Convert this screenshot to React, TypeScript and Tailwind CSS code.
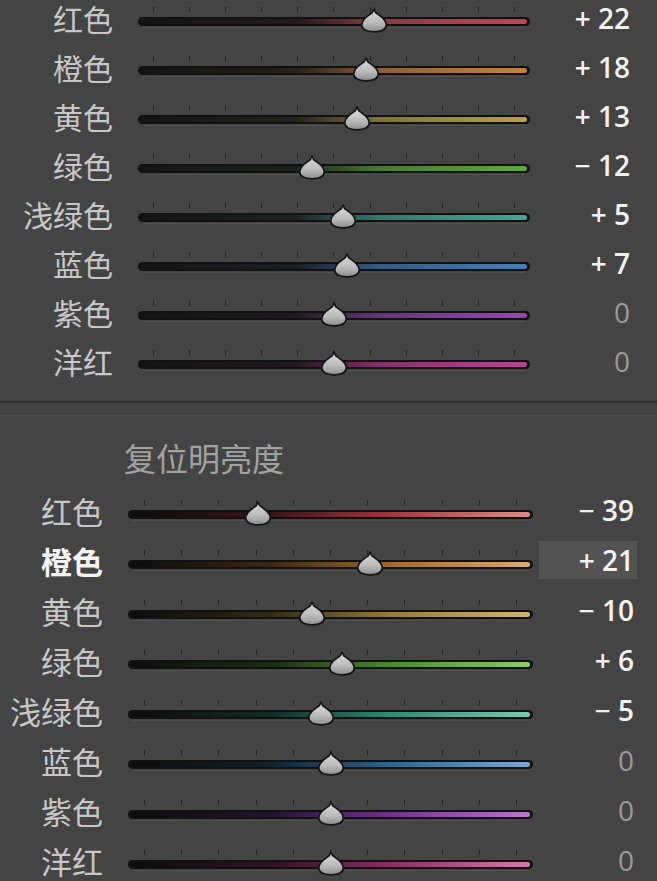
import React from 'react';

type Row = {
  label: string;
  value: number;
  fill: string;
};

const saturation: Row[] = [
  { label: '红色', value: 22, fill: 'bg-[linear-gradient(to_right,#141414_0%,#24181a_40%,#8a3a42_62%,#c4464f_100%)]' },
  { label: '橙色', value: 18, fill: 'bg-[linear-gradient(to_right,#141414_0%,#262018_40%,#8a6038_62%,#c4843f_100%)]' },
  { label: '黄色', value: 13, fill: 'bg-[linear-gradient(to_right,#141414_0%,#24221a_40%,#857238_62%,#bca043_100%)]' },
  { label: '绿色', value: -12, fill: 'bg-[linear-gradient(to_right,#141414_0%,#1a221a_40%,#4a7a36_62%,#62a83e_100%)]' },
  { label: '浅绿色', value: 5, fill: 'bg-[linear-gradient(to_right,#141414_0%,#1a2422_40%,#327a70_62%,#3fa89a_100%)]' },
  { label: '蓝色', value: 7, fill: 'bg-[linear-gradient(to_right,#141414_0%,#1a1e24_40%,#345c82_62%,#4580b4_100%)]' },
  { label: '紫色', value: 0, fill: 'bg-[linear-gradient(to_right,#141414_0%,#221a24_40%,#6a3284_62%,#9a44b8_100%)]' },
  { label: '洋红', value: 0, fill: 'bg-[linear-gradient(to_right,#141414_0%,#241a22_40%,#84326c_62%,#b84494_100%)]' },
];

const luminance: Row[] = [
  { label: '红色', value: -39, fill: 'bg-[linear-gradient(to_right,#0c0c0c_0%,#3a1416_35%,#a0383e_65%,#dc8c8c_100%)]' },
  { label: '橙色', value: 21, fill: 'bg-[linear-gradient(to_right,#0c0c0c_0%,#3a2812_35%,#a06a30_65%,#dcaa78_100%)]' },
  { label: '黄色', value: -10, fill: 'bg-[linear-gradient(to_right,#0c0c0c_0%,#322a12_35%,#947e34_65%,#ccb67a_100%)]' },
  { label: '绿色', value: 6, fill: 'bg-[linear-gradient(to_right,#0c0c0c_0%,#1a2e12_35%,#4a8a30_65%,#8ccc6c_100%)]' },
  { label: '浅绿色', value: -5, fill: 'bg-[linear-gradient(to_right,#0c0c0c_0%,#122c26_35%,#2e8a74_65%,#7ec8b0_100%)]' },
  { label: '蓝色', value: 0, fill: 'bg-[linear-gradient(to_right,#0c0c0c_0%,#12222e_35%,#30648e_65%,#7aa8d0_100%)]' },
  { label: '紫色', value: 0, fill: 'bg-[linear-gradient(to_right,#0c0c0c_0%,#261230_35%,#70308e_65%,#b878d0_100%)]' },
  { label: '洋红', value: 0, fill: 'bg-[linear-gradient(to_right,#0c0c0c_0%,#2e1224_35%,#8a2e66_65%,#d47aaa_100%)]' },
];

function Thumb() {
  return (
    <svg width="28" height="25" viewBox="0 0 28 25">
      <defs>
        <linearGradient id="thumbFill" x1="0" y1="0" x2="0" y2="1">
          <stop offset="0" stopColor="#dedede" />
          <stop offset="0.6" stopColor="#bababa" />
          <stop offset="1" stopColor="#8e8e8e" />
        </linearGradient>
      </defs>
      <path
        d="M14 1 L15.8 4.8 C20.5 8.2 26.3 11.4 26.3 16.8 C26.3 21.6 21.5 23.8 14 23.8 C6.5 23.8 1.7 21.6 1.7 16.8 C1.7 11.4 7.5 8.2 12.2 4.8 Z"
        fill="url(#thumbFill)"
        stroke="#151515"
        strokeWidth="1.7"
        strokeLinejoin="round"
      />
    </svg>
  );
}

function Slider({ value, fill, width, inset }: { value: number; fill: string; width: number; inset: number }) {
  const span = width - inset * 2 - 1;
  const pos = inset + 0.5 + ((value + 100) / 200) * span;
  return (
    <div className="relative shrink-0" style={{ width }}>
      <div className="flex h-[5px] justify-between" style={{ paddingLeft: inset, paddingRight: inset }}>
        {Array.from({ length: 11 }).map((_, i) => (
          <span key={i} className="h-full w-px bg-[#222222]" />
        ))}
      </div>
      <div className="mt-[5px] h-[9px] rounded-full bg-[#111111] px-[3px] py-[2px]">
        <div className={`h-full rounded-full ${fill}`} />
      </div>
      <div className="mx-[5px] mt-px h-px bg-[#505050]" />
      <div className="absolute top-[1px]" style={{ left: pos - 14 }}>
        <Thumb />
      </div>
    </div>
  );
}

function formatValue(v: number) {
  if (v > 0) return `+ ${v}`;
  if (v < 0) return `− ${Math.abs(v)}`;
  return '0';
}

export default function App() {
  return (
    <div className="h-[881px] w-[657px] overflow-hidden bg-[#444444] font-['Noto_Sans_CJK_SC',sans-serif]">
      {/* Saturation */}
      <div className="-mt-[7px]">
        {saturation.map((row) => (
          <div key={row.label} className="flex h-[49px] items-center">
            <div className="w-[113px] text-right text-[30px] leading-none text-[#c8c8c8]">{row.label}</div>
            <div className="ml-[25px]">
              <Slider value={row.value} fill={row.fill} width={392} inset={15} />
            </div>
            <div
              className={`w-[100px] text-right font-['Open_Sans',sans-serif] text-[28px] leading-none ${
                row.value === 0 ? 'text-[#9a9a9a]' : 'font-semibold text-[#f2f2f2]'
              }`}
            >
              {formatValue(row.value)}
            </div>
          </div>
        ))}
      </div>

      {/* Divider */}
      <div className="mt-[16px] h-[2px] bg-[#2f2f2f]" />
      <div className="mt-[12px] h-px bg-[#4c4c4c]" />

      {/* Luminance */}
      <div className="mt-[21px] flex h-[40px] items-center pl-[124px] text-[32px] leading-none text-[#a2a2a2]">
        复位明亮度
      </div>
      <div className="mt-[8px]">
        {luminance.map((row) => {
          const active = row.label === '橙色';
          return (
            <div key={row.label} className="flex h-[50px] items-center">
              <div
                className={`w-[103px] text-right text-[31px] leading-none ${
                  active ? 'font-bold text-[#f4f4f4]' : 'text-[#c8c8c8]'
                }`}
              >
                {row.label}
              </div>
              <div className="ml-[25px]">
                <Slider value={row.value} fill={row.fill} width={405} inset={16} />
              </div>
              <div
                className={`ml-[6px] flex h-[38px] w-[98px] items-center justify-end pr-[3px] font-['Open_Sans',sans-serif] text-[28px] leading-none ${
                  active ? 'bg-[#535353]' : ''
                } ${row.value === 0 ? 'text-[#9a9a9a]' : 'font-semibold text-[#f2f2f2]'}`}
              >
                {formatValue(row.value)}
              </div>
            </div>
          );
        })}
      </div>
    </div>
  );
}
